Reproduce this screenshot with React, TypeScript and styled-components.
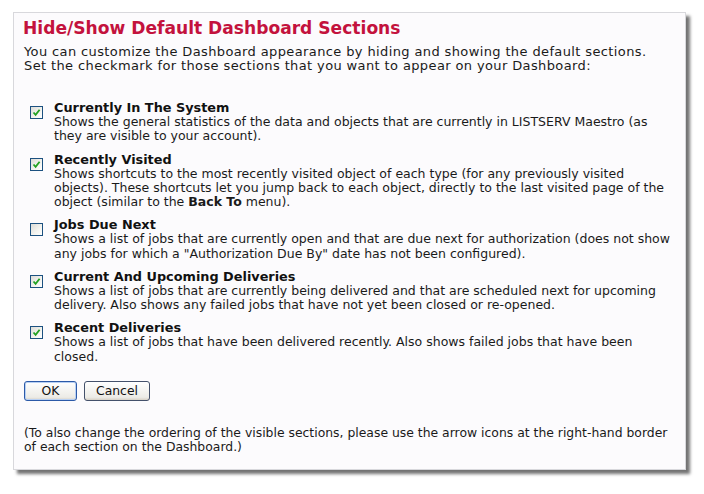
import React from "react";
import styled, { createGlobalStyle } from "styled-components";

const Global = createGlobalStyle`
  html, body { margin: 0; padding: 0; background: #ffffff; }
  body { font-family: "DejaVu Sans", Verdana, sans-serif; color: #1a1a1a; }
`;

const Page = styled.div`
  width: 704px;
  height: 494px;
  padding: 12px 0 0 13px;
  box-sizing: border-box;
`;

const Panel = styled.div`
  width: 673px;
  height: 458px;
  box-sizing: border-box;
  background: #fcfbfd;
  border: 1px solid #d8d8dc;
  box-shadow: 4px 4px 3px rgba(0, 0, 0, 0.55);
  padding: 3px 10px 0 10px;
`;

const Title = styled.h1`
  margin: 0 0 0 -1px;
  font-size: 17.1px;
  font-weight: bold;
  color: #c3123d;
  line-height: 24px;
`;

const Intro = styled.p`
  margin: 5px 0 0 0;
  font-size: 13px;
  letter-spacing: 0.38px;
  line-height: 14px;
`;

const Footer = styled.p`
  margin: 25px 0 0 0;
  font-size: 12.4px;
  line-height: 14px;
`;

const List = styled.div`
  display: flex;
  flex-direction: column;
  gap: 8px;
  margin: 27px 0 0 6px;
`;

const Item = styled.label`
  display: flex;
  align-items: flex-start;
  gap: 11px;
`;

const Box = styled.span<{ $checked: boolean }>`
  flex: none;
  width: 11px;
  height: 11px;
  margin-top: 6px;
  border: 1px solid #1c5180;
  background: linear-gradient(135deg, #dcdcd7 0%, #f4f4f0 60%, #ffffff 100%);
  display: flex;
  align-items: center;
  justify-content: center;
`;

const Body = styled.div`
  display: flex;
  flex-direction: column;
`;

const ItemTitle = styled.div`
  font-size: 12.85px;
  font-weight: bold;
  line-height: 15px;
  color: #111;
`;

const Desc = styled.div`
  font-size: 12.5px;
  line-height: 14.25px;
  b { font-weight: bold; }
`;

const Buttons = styled.div`
  display: flex;
  gap: 7px;
  margin: 17px 0 0 0;
`;

const Button = styled.button<{ $primary?: boolean }>`
  font-family: "DejaVu Sans", Verdana, sans-serif;
  font-size: 12.4px;
  height: 20px;
  padding: 0 9px;
  color: #111;
  background: linear-gradient(#ffffff, #ecebe6 85%, #d6d0c5);
  border: 1px solid ${(p) => (p.$primary ? "#2c5aa8" : "#44516b")};
  border-radius: 3px;
  box-shadow: ${(p) => (p.$primary ? "inset 0 0 0 1px #b8d0f3" : "none")};
  width: ${(p) => (p.$primary ? "53px" : "66px")};
`;

const Check = () => (
  <svg width="9" height="9" viewBox="0 0 9 9">
    <path d="M1.5 4.5 L3.6 6.8 L7.6 1.8" stroke="#21a121" strokeWidth="1.8" fill="none" />
  </svg>
);

const items: { title: string; checked: boolean; desc: React.ReactNode }[] = [
  {
    title: "Currently In The System",
    checked: true,
    desc: (
      <>
        Shows the general statistics of the data and objects that are currently in LISTSERV Maestro (as
        <br />
        they are visible to your account).
      </>
    ),
  },
  {
    title: "Recently Visited",
    checked: true,
    desc: (
      <>
        Shows shortcuts to the most recently visited object of each type (for any previously visited
        <br />
        objects). These shortcuts let you jump back to each object, directly to the last visited page of the
        <br />
        object (similar to the <b>Back To</b> menu).
      </>
    ),
  },
  {
    title: "Jobs Due Next",
    checked: false,
    desc: (
      <>
        Shows a list of jobs that are currently open and that are due next for authorization (does not show
        <br />
        any jobs for which a "Authorization Due By" date has not been configured).
      </>
    ),
  },
  {
    title: "Current And Upcoming Deliveries",
    checked: true,
    desc: (
      <>
        Shows a list of jobs that are currently being delivered and that are scheduled next for upcoming
        <br />
        delivery. Also shows any failed jobs that have not yet been closed or re-opened.
      </>
    ),
  },
  {
    title: "Recent Deliveries",
    checked: true,
    desc: (
      <>
        Shows a list of jobs that have been delivered recently. Also shows failed jobs that have been
        <br />
        closed.
      </>
    ),
  },
];

export default function App() {
  return (
    <Page>
      <Global />
      <Panel>
        <Title>Hide/Show Default Dashboard Sections</Title>
        <Intro>
          You can customize the Dashboard appearance by hiding and showing the default sections.
          <br />
          Set the checkmark for those sections that you want to appear on your Dashboard:
        </Intro>
        <List>
          {items.map((it) => (
            <Item key={it.title}>
              <Box $checked={it.checked}>{it.checked && <Check />}</Box>
              <Body>
                <ItemTitle>{it.title}</ItemTitle>
                <Desc>{it.desc}</Desc>
              </Body>
            </Item>
          ))}
        </List>
        <Buttons>
          <Button $primary>OK</Button>
          <Button>Cancel</Button>
        </Buttons>
        <Footer>
          (To also change the ordering of the visible sections, please use the arrow icons at the right-hand border
          <br />
          of each section on the Dashboard.)
        </Footer>
      </Panel>
    </Page>
  );
}
